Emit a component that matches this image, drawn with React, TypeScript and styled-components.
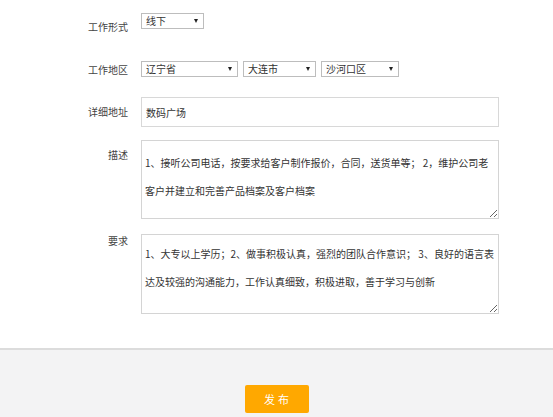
import React from 'react';
import styled, { createGlobalStyle } from 'styled-components';

const GlobalStyle = createGlobalStyle`
  html, body {
    margin: 0;
    padding: 0;
    background: #fff;
    overflow: hidden;
  }
  body {
    font-family: "Noto Sans CJK SC", "Liberation Sans", sans-serif;
    color: #333;
  }
`;

const Page = styled.div`
  width: 553px;
  height: 417px;
  display: flex;
  flex-direction: column;
`;

const Form = styled.div`
  display: flex;
  flex-direction: column;
  padding-top: 13px;
`;

const Row = styled.div<{ $mt?: number }>`
  display: flex;
  align-items: flex-start;
  margin-top: ${props => props.$mt || 0}px;
`;

const Label = styled.div<{ $pt?: number }>`
  width: 128px;
  margin-right: 13px;
  padding-top: ${props => props.$pt || 0}px;
  text-align: right;
  font-size: 10px;
  line-height: 14px;
  color: #444;
`;

const Selects = styled.div`
  display: flex;
  gap: 5px;
`;

const SelectWrap = styled.div<{ $w: number }>`
  position: relative;
  width: ${props => props.$w}px;
  height: 16px;
  line-height: 0;

  &::after {
    content: '';
    position: absolute;
    right: 6px;
    top: 6px;
    border-left: 2.5px solid transparent;
    border-right: 2.5px solid transparent;
    border-top: 4px solid #222;
    pointer-events: none;
  }
`;

const Select = styled.select`
  appearance: none;
  -webkit-appearance: none;
  display: block;
  box-sizing: border-box;
  width: 100%;
  height: 16px;
  margin: 0;
  padding: 0 0 0 4px;
  border: 1px solid #bdbdbd;
  border-radius: 0;
  background: #fff;
  font-family: "Noto Sans CJK SC", sans-serif;
  font-size: 10px;
  line-height: 14px;
  color: #333;
`;

const Input = styled.input`
  display: block;
  box-sizing: border-box;
  width: 358px;
  height: 30px;
  margin: 0;
  padding: 0 4px;
  border: 1px solid #d8d8d8;
  font-family: "Noto Sans CJK SC", sans-serif;
  font-size: 10px;
  color: #333;
  outline: none;
`;

const TextArea = styled.textarea<{ $h: number; $pt: number }>`
  display: block;
  box-sizing: border-box;
  width: 358px;
  height: ${props => props.$h}px;
  margin: 0;
  padding: ${props => props.$pt}px 3px 0 3px;
  border: 1px solid #d4d4d4;
  font-family: "Noto Sans CJK SC", sans-serif;
  font-size: 10px;
  line-height: 28px;
  color: #333;
  outline: none;
  overflow: hidden;
`;

const Footer = styled.div`
  margin-top: 34px;
  flex: 1;
  border-top: 2px solid #dcdcdc;
  background: #f3f3f4;
  display: flex;
  justify-content: center;
  align-items: flex-start;
  padding-top: 35px;
`;

const Button = styled.button`
  width: 64px;
  height: 28px;
  border: none;
  border-radius: 2px;
  background: #ffa800;
  color: #fff;
  font-family: "Noto Sans CJK SC", sans-serif;
  font-size: 11px;
  letter-spacing: 3px;
  text-indent: 3px;
  padding: 0;
`;

export default function App() {
  return (
    <Page>
      <GlobalStyle />
      <Form>
        <Row>
          <Label $pt={7}>工作形式</Label>
          <SelectWrap $w={63}>
            <Select defaultValue="线下">
              <option>线下</option>
              <option>线上</option>
            </Select>
          </SelectWrap>
        </Row>
        <Row $mt={27}>
          <Label $pt={2}>工作地区</Label>
          <Selects>
            <SelectWrap $w={97}>
              <Select defaultValue="辽宁省">
                <option>辽宁省</option>
              </Select>
            </SelectWrap>
            <SelectWrap $w={73}>
              <Select defaultValue="大连市">
                <option>大连市</option>
              </Select>
            </SelectWrap>
            <SelectWrap $w={78}>
              <Select defaultValue="沙河口区">
                <option>沙河口区</option>
              </Select>
            </SelectWrap>
          </Selects>
        </Row>
        <Row $mt={20}>
          <Label $pt={8}>详细地址</Label>
          <Input defaultValue="数码广场" />
        </Row>
        <Row $mt={13}>
          <Label $pt={8}>描述</Label>
          <TextArea
            $h={79}
            $pt={8}
            defaultValue="1、接听公司电话，按要求给客户制作报价，合同，送货单等； 2，维护公司老客户并建立和完善产品档案及客户档案"
          />
        </Row>
        <Row $mt={15}>
          <Label $pt={0}>要求</Label>
          <TextArea
            $h={80}
            $pt={5}
            defaultValue="1、大专以上学历；2、做事积极认真，强烈的团队合作意识； 3、良好的语言表达及较强的沟通能力，工作认真细致，积极进取，善于学习与创新"
          />
        </Row>
      </Form>
      <Footer>
        <Button>发布</Button>
      </Footer>
    </Page>
  );
}
